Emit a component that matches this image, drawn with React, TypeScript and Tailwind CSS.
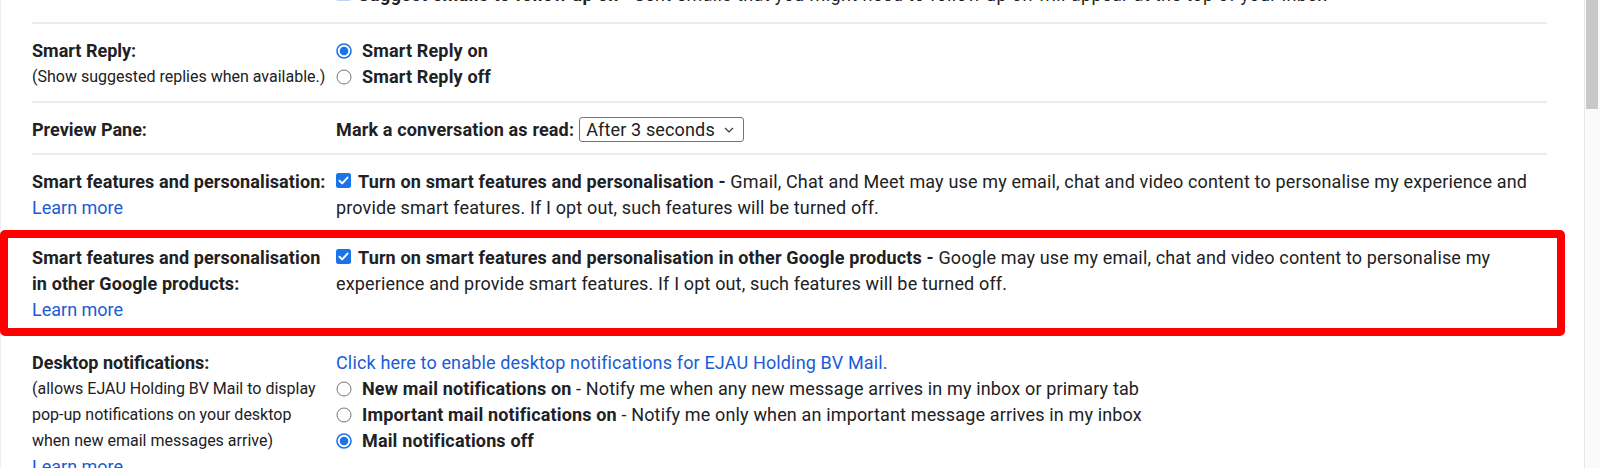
import React from "react";

const BLUE = "#1a73e8";

function Check({ faded = false }: { faded?: boolean }) {
  return (
    <svg
      width="15"
      height="15"
      viewBox="0 0 15 15"
      className="inline-block mr-[7px] align-[0px]"
    >
      <rect x="0" y="0" width="15" height="15" rx="2.5" fill={faded ? "#b9d3fb" : BLUE} />
      {!faded && (
        <path
          d="M3.5 7.8 L6.2 10.4 L11.5 4.6"
          stroke="#ffffff"
          strokeWidth="2"
          fill="none"
          strokeLinecap="round"
          strokeLinejoin="round"
        />
      )}
    </svg>
  );
}

function Radio({ on = false }: { on?: boolean }) {
  return (
    <svg width="16" height="16" viewBox="0 0 16 16" className="shrink-0 mr-[10px]">
      {on ? (
        <>
          <circle cx="8" cy="8" r="7" fill="#ffffff" stroke={BLUE} strokeWidth="1.6" />
          <circle cx="8" cy="8" r="4.3" fill={BLUE} />
        </>
      ) : (
        <circle cx="8" cy="8" r="7" fill="#ffffff" stroke="#767676" strokeWidth="1" />
      )}
    </svg>
  );
}

function RadioLine({ on, children }: { on?: boolean; children: React.ReactNode }) {
  return (
    <div className="flex items-center">
      <Radio on={on} />
      <span>{children}</span>
    </div>
  );
}

function Row({
  label,
  children,
  className = "",
}: {
  label: React.ReactNode;
  children: React.ReactNode;
  className?: string;
}) {
  return (
    <div
      className={`grid grid-cols-[304px_1fr] border-b-2 border-[#ececec] pb-[11px] ${className}`}
    >
      <div>{label}</div>
      <div className="text-[18px] tracking-[0.15px]">{children}</div>
    </div>
  );
}

const LearnMore = () => (
  <div className="text-[18px] text-[#1a5bd6]">Learn more</div>
);

export default function App() {
  return (
    <div
      className="relative w-[1600px] h-[468px] overflow-hidden bg-white text-[#202124] leading-[26px] flex"
      style={{ fontFamily: "Roboto, 'Liberation Sans', Arial, sans-serif" }}
    >
      <div className="flex-1 pl-[31px] pr-[37px] border-l border-[#eeeeee]">
        {/* partially visible top row */}
        <div className="grid grid-cols-[304px_1fr] border-b-2 border-[#ececec] mt-[-18px] pb-[14px]">
          <div />
          <div className="text-[18px] tracking-[0.4px] whitespace-nowrap">
            <Check faded />
            <b className="font-bold">Suggest emails to follow up on</b> - Sent emails that you
            might need to follow up on will appear at the top of your inbox
          </div>
        </div>

        <Row
          className="pt-[14px]"
          label={
            <>
              <div className="text-[18px] font-bold">Smart Reply:</div>
              <div className="text-[16px] whitespace-nowrap">(Show suggested replies when available.)</div>
            </>
          }
        >
          <RadioLine on>
            <b className="font-bold">Smart Reply on</b>
          </RadioLine>
          <RadioLine>
            <b className="font-bold">Smart Reply off</b>
          </RadioLine>
        </Row>

        <Row
          className="pt-[14px]"
          label={<div className="text-[18px] font-bold leading-[25px]">Preview Pane:</div>}
        >
          <div className="flex items-center h-[25px]">
            <b className="font-bold mr-[5px]">Mark a conversation as read:</b>
            <div className="flex items-center justify-between w-[165px] h-[25px] border border-[#767676] rounded-[3px] pl-[6px] pr-[9px] leading-[23px]">
              <span>After 3 seconds</span>
              <svg width="10" height="6" viewBox="0 0 10 6">
                <path d="M1 1 L5 5 L9 1" stroke="#333" strokeWidth="1.1" fill="none" />
              </svg>
            </div>
          </div>
        </Row>

        <Row
          className="pt-[14px]"
          label={
            <>
              <div className="text-[18px] font-bold whitespace-nowrap tracking-[0.1px]">Smart features and personalisation:</div>
              <LearnMore />
            </>
          }
        >
          <Check />
          <b className="font-bold">Turn on smart features and personalisation -</b> Gmail, Chat
          and Meet may use my email, chat and video content to personalise my experience and
          provide smart features. If I opt out, such features will be turned off.
        </Row>

        <Row
          className="pt-[11px]"
          label={
            <>
              <div className="text-[18px] font-bold tracking-[0.1px]">
                Smart features and personalisation
                <br />
                in other Google products:
              </div>
              <LearnMore />
            </>
          }
        >
          <Check />
          <b className="font-bold">
            Turn on smart features and personalisation in other Google products -
          </b>{" "}
          Google may use my email, chat and video content to personalise my experience and
          provide smart features. If I opt out, such features will be turned off.
        </Row>

        <Row
          className="pt-[14px]"
          label={
            <>
              <div className="text-[18px] font-bold">Desktop notifications:</div>
              <div className="text-[16px]">
                (allows EJAU Holding BV Mail to display
                <br />
                pop-up notifications on your desktop
                <br />
                when new email messages arrive)
              </div>
              <LearnMore />
            </>
          }
        >
          <div className="text-[#1a5bd6]">
            Click here to enable desktop notifications for EJAU Holding BV Mail.
          </div>
          <RadioLine>
            <b className="font-bold">New mail notifications on</b> - Notify me when any new
            message arrives in my inbox or primary tab
          </RadioLine>
          <RadioLine>
            <b className="font-bold">Important mail notifications on</b> - Notify me only when an
            important message arrives in my inbox
          </RadioLine>
          <RadioLine on>
            <b className="font-bold">Mail notifications off</b>
          </RadioLine>
        </Row>
      </div>

      {/* scrollbar */}
      <div className="w-[16px] h-full bg-[#fafafa] border-l border-[#e6e6e6] pl-[1px] pr-[2px]">
        <div className="h-[109px] bg-[#c8c8c8]" />
      </div>

      {/* red annotation box */}
      <div className="absolute left-0 top-[230px] w-[1565px] h-[106px] border-[8px] border-[#ff0000] rounded-[5px] pointer-events-none" />
    </div>
  );
}
